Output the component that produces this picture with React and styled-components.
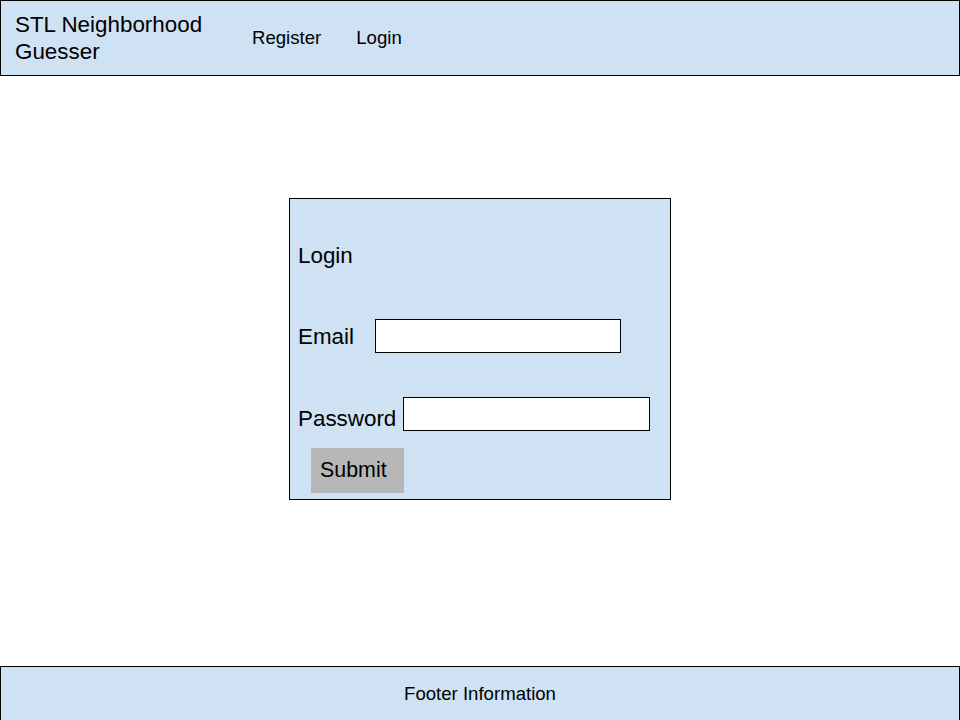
import React from 'react';
import styled, { createGlobalStyle } from 'styled-components';

const GlobalStyle = createGlobalStyle`
  html, body {
    margin: 0;
    padding: 0;
  }
  body {
    font-family: "Liberation Sans", Arial, sans-serif;
    color: #000;
    background: #fff;
  }
`;

function App() {
  return (
    <>
      <GlobalStyle />
      <Page>
        <Header>
          <SiteTitle>STL Neighborhood<br />Guesser</SiteTitle>
          <Nav>
            <NavLink>Register</NavLink>
            <NavLink>Login</NavLink>
          </Nav>
        </Header>
        <Main>
          <LoginCard>
            <CardTitle>Login</CardTitle>
            <FieldRow $top={52} $align="center">
              <FieldLabel>Email</FieldLabel>
              <TextInput type="email" $offset={21} />
            </FieldRow>
            <FieldRow $top={44} $align="flex-end">
              <FieldLabel $lift={1}>Password</FieldLabel>
              <TextInput type="password" $offset={7} $width={247} />
            </FieldRow>
            <SubmitButton>Submit</SubmitButton>
          </LoginCard>
        </Main>
        <Footer>Footer Information</Footer>
      </Page>
    </>
  );
}

export default App;

const Page = styled.div`
  display: flex;
  flex-direction: column;
  width: 960px;
  height: 720px;
  overflow: hidden;
`;

const Header = styled.header`
  display: flex;
  align-items: center;
  box-sizing: border-box;
  height: 76px;
  padding-left: 14px;
  background: #cfe2f3;
  border: 1px solid #000;
`;

const SiteTitle = styled.div`
  width: 237px;
  font-size: 22.4px;
  line-height: 27px;
`;

const Nav = styled.nav`
  display: flex;
  gap: 35px;
`;

const NavLink = styled.span`
  font-size: 18.6px;
  line-height: 22px;
  cursor: pointer;
`;

const Main = styled.main`
  flex: 1;
  display: flex;
  justify-content: center;
  align-items: flex-start;
  padding-top: 122px;
`;

const LoginCard = styled.form`
  display: flex;
  flex-direction: column;
  box-sizing: border-box;
  width: 382px;
  height: 302px;
  padding: 45px 8px 0 8px;
  background: #cfe2f3;
  border: 1px solid #000;
`;

const CardTitle = styled.div`
  font-size: 22.4px;
  line-height: 23px;
  height: 23px;
`;

const FieldRow = styled.div`
  display: flex;
  align-items: ${(p) => p.$align};
  margin-top: ${(p) => p.$top}px;
  height: 34px;
`;

const FieldLabel = styled.label`
  font-size: 22.4px;
  line-height: 23px;
  padding-bottom: ${(p) => p.$lift || 0}px;
`;

const TextInput = styled.input`
  box-sizing: border-box;
  width: ${(p) => p.$width || 246}px;
  height: 34px;
  margin: 0 0 0 ${(p) => p.$offset}px;
  padding: 0 6px;
  background: #fff;
  border: 1px solid #000;
  border-radius: 0;
  outline: none;
`;

const SubmitButton = styled.button`
  align-self: flex-start;
  box-sizing: border-box;
  width: 93px;
  height: 45px;
  margin: 17px 0 0 13px;
  padding: 0 0 0 9px;
  text-align: left;
  font-family: "Liberation Sans", Arial, sans-serif;
  font-size: 21.4px;
  color: #000;
  background: #b7b7b7;
  border: none;
  border-radius: 0;
  cursor: pointer;
`;

const Footer = styled.footer`
  display: flex;
  align-items: center;
  justify-content: center;
  box-sizing: border-box;
  height: 54px;
  background: #cfe2f3;
  border: 1px solid #000;
  border-bottom: none;
  font-size: 18.6px;
`;
